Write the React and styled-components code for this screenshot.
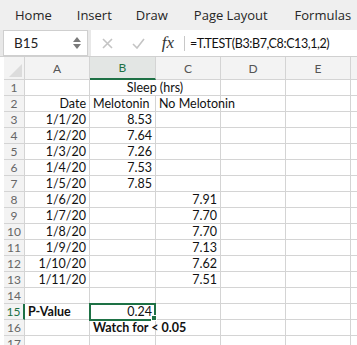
import React from 'react'
import styled, { createGlobalStyle } from 'styled-components'

const GlobalStyle = createGlobalStyle`
  body {
    margin: 0;
    background: #ffffff;
    font-family: Lato, 'Liberation Sans', sans-serif;
  }
`

const Page = styled.div`
  width: 357px;
  height: 345px;
  overflow: hidden;
  background: #ffffff;
`
const Ribbon = styled.div`
  height: 30px;
  background: #efefef;
  display: flex;
  align-items: center;
  font-family: 'Open Sans', sans-serif;
  font-size: 13px;
  color: #262626;
`
const Tab = styled.div`
  margin-left: ${(p) => p.left}px;
  white-space: nowrap;
`
const FormulaBar = styled.div`
  height: 27px;
  background: #e8e8e8;
  display: flex;
  padding-left: 3px;
  border-bottom: 1px solid #d0d0d0;
  box-sizing: border-box;
`
const NameBox = styled.div`
  width: 85px;
  height: 26px;
  background: #ffffff;
  border: 1px solid #cfcfcf;
  box-sizing: border-box;
  display: flex;
  align-items: center;
  justify-content: space-between;
  padding: 0 6px 0 10px;
  font-size: 13.5px;
  color: #222;
`
const Spinner = styled.div`
  display: flex;
  flex-direction: column;
  gap: 2px;
`
const FormulaArea = styled.div`
  flex: 1;
  margin-left: 3px;
  height: 26px;
  background: #ffffff;
  display: flex;
  align-items: center;
`
const IconSlot = styled.div`
  width: ${(p) => p.w}px;
  display: flex;
  justify-content: center;
`
const Fx = styled.span`
  font-family: 'Liberation Serif', serif;
  font-style: italic;
  font-size: 17px;
  color: #333;
`
const Divider = styled.div`
  width: 1px;
  height: 15px;
  background: #c8c8c8;
  margin: 0 5px 0 1px;
`
const Formula = styled.div`
  font-size: 12.5px;
  letter-spacing: -0.4px;
  color: #111;
  white-space: nowrap;
`
const Sheet = styled.div`
  display: grid;
  grid-template-columns: 21px 65px 66px 65px 65px 65px 20px;
  grid-template-rows: 23px repeat(17, 16px);
  margin-left: 4px;
  font-size: 12.5px;
  color: #111;
  position: relative;
`
const Corner = styled.div`
  background: #f3f3f3;
  border-right: 1px solid #d4d4d4;
  border-bottom: 1px solid #d4d4d4;
  position: relative;
  overflow: hidden;
  &::after {
    content: '';
    position: absolute;
    right: 2px;
    bottom: 2px;
    border-style: solid;
    border-width: 0 0 13px 13px;
    border-color: transparent transparent #dcdcdc transparent;
  }
`
const ColHead = styled.div`
  background: ${(p) => (p.active ? '#e3e6e4' : '#f3f3f3')};
  color: ${(p) => (p.active ? '#1e7145' : '#555')};
  border-right: 1px solid #d4d4d4;
  border-bottom: ${(p) => (p.active ? '2px solid #1e7145' : '1px solid #d4d4d4')};
  display: flex;
  align-items: center;
  justify-content: center;
  font-size: 12px;
`
const RowHead = styled.div`
  background: #f3f3f3;
  color: ${(p) => (p.active ? '#1e7145' : '#666')};
  border-right: ${(p) => (p.active ? '2px solid #1e7145' : '1px solid #d4d4d4')};
  border-bottom: 1px solid #d4d4d4;
  display: flex;
  align-items: center;
  justify-content: center;
  font-size: 12px;
`
const Cell = styled.div`
  grid-column: ${(p) => (p.span ? `span ${p.span}` : 'auto')};
  border-right: 1px solid #d4d4d4;
  border-bottom: 1px solid #d4d4d4;
  display: flex;
  align-items: center;
  justify-content: ${(p) =>
    p.align === 'right' ? 'flex-end' : p.align === 'center' ? 'center' : 'flex-start'};
  padding: 0 3px;
  font-weight: ${(p) => (p.bold ? 700 : 400)};
  white-space: nowrap;
  overflow: ${(p) => (p.spill ? 'visible' : 'hidden')};
  min-width: 0;
  position: relative;
  z-index: ${(p) => (p.spill ? 1 : 0)};
`
const Selection = styled.div`
  position: absolute;
  z-index: 2;
  left: 85px;
  top: ${23 + 16 * 14 - 1}px;
  width: 67px;
  height: 18px;
  border: 2px solid #1e7145;
  box-sizing: border-box;
  pointer-events: none;
  &::after {
    content: '';
    position: absolute;
    right: -3px;
    bottom: -2px;
    width: 6px;
    height: 6px;
    box-sizing: border-box;
    background: #1e7145;
    border: 1px solid #fff;
  }
`

const rows = [
  [{ v: '' }, { v: 'Sleep (hrs)', align: 'center', span: 2 }],
  [{ v: 'Date', align: 'right' }, { v: 'Melotonin' }, { v: 'No Melotonin', spill: true }],
  ['1/1/20', '8.53', ''],
  ['1/2/20', '7.64', ''],
  ['1/3/20', '7.26', ''],
  ['1/4/20', '7.53', ''],
  ['1/5/20', '7.85', ''],
  ['1/6/20', '', '7.91'],
  ['1/7/20', '', '7.70'],
  ['1/8/20', '', '7.70'],
  ['1/9/20', '', '7.13'],
  ['1/10/20', '', '7.62'],
  ['1/11/20', '', '7.51'],
  ['', '', ''],
  [{ v: 'P-Value', bold: true }, { v: '0.24', align: 'right' }],
  [{ v: '' }, { v: 'Watch for < 0.05', bold: true, spill: true }],
  ['', '', ''],
]

// pad every row out to the six visible columns (A-F)
function normalize(row) {
  const cells = row.map((c) => (typeof c === 'string' ? { v: c, align: 'right' } : c))
  let used = cells.reduce((n, c) => n + (c.span || 1), 0)
  while (used < 6) {
    cells.push({ v: '' })
    used += 1
  }
  return cells
}

function App() {
  const cols = ['A', 'B', 'C', 'D', 'E', '']
  return (
    <Page>
      <GlobalStyle />
      <Ribbon>
        <Tab left={15}>Home</Tab>
        <Tab left={25}>Insert</Tab>
        <Tab left={24}>Draw</Tab>
        <Tab left={26}>Page Layout</Tab>
        <Tab left={27}>Formulas</Tab>
      </Ribbon>
      <FormulaBar>
        <NameBox>
          B15
          <Spinner>
            <svg width="8" height="5" viewBox="0 0 8 5"><path d="M4 0 L8 5 L0 5 Z" fill="#7a7a7a" /></svg>
            <svg width="8" height="5" viewBox="0 0 8 5"><path d="M0 0 L8 0 L4 5 Z" fill="#7a7a7a" /></svg>
          </Spinner>
        </NameBox>
        <FormulaArea>
          <IconSlot w={32}>
            <svg width="11" height="11" viewBox="0 0 11 11"><path d="M1 1 L10 10 M10 1 L1 10" stroke="#c4c4c4" strokeWidth="1.6" /></svg>
          </IconSlot>
          <IconSlot w={30}>
            <svg width="13" height="11" viewBox="0 0 13 11"><path d="M1 6 L5 10 L12 1" stroke="#c4c4c4" strokeWidth="1.6" fill="none" /></svg>
          </IconSlot>
          <IconSlot w={30}>
            <Fx>fx</Fx>
          </IconSlot>
          <Divider />
          <Formula>=T.TEST(B3:B7,C8:C13,1,2)</Formula>
        </FormulaArea>
      </FormulaBar>
      <Sheet>
        <Corner />
        {cols.map((c, i) => (
          <ColHead key={i} active={c === 'B'}>{c}</ColHead>
        ))}
        {rows.map((row, r) => (
          <React.Fragment key={r}>
            <RowHead active={r + 1 === 15}>{r + 1}</RowHead>
            {normalize(row).map((cell, c) => (
              <Cell key={c} align={cell.align} bold={cell.bold} span={cell.span} spill={cell.spill}>
                {cell.v}
              </Cell>
            ))}
          </React.Fragment>
        ))}
        <Selection />
      </Sheet>
    </Page>
  )
}

export default App
